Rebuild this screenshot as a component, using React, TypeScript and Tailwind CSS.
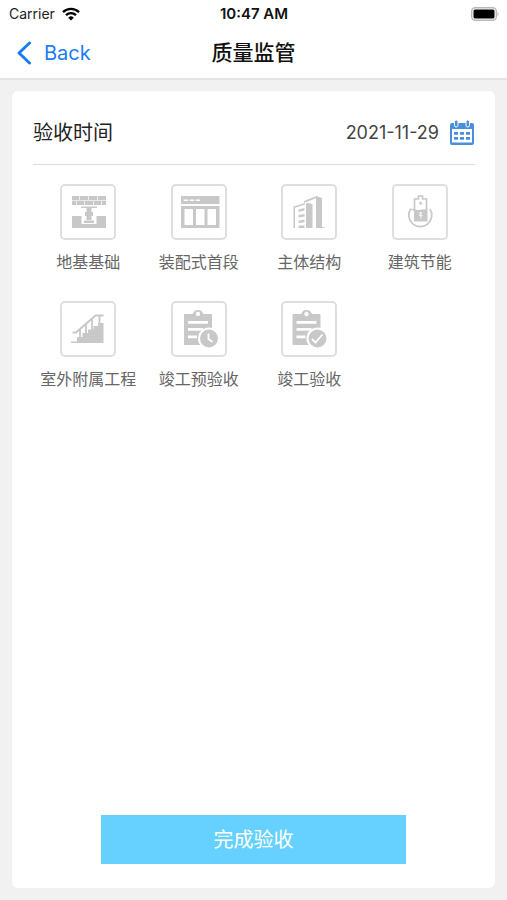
import type { ReactNode } from 'react';

// Clipboard shared by the two completion icons
function Clipboard({ children }: { children: ReactNode }) {
  return (
    <>
      <path d="M14 13h6.500c1 0 1.500-.5 2-1.500C23.500 9.700 25 9 27 9s3.500.7 4.500 2.500c.5 1 1 1.500 2 1.500H40c.7 0 1 .4 1 1v29c0 .7-.4 1-1 1H14c-.7 0-1-.4-1-1V14c0-.6.4-1 1-1z" />
      <circle cx="27" cy="13" r="2.200" fill="#fff" />
      <path d="M17 20h20v2.800H17zM17 27h15v2.800H17zM17 34.500h9v2.800h-9z" fill="#fff" />
      <circle cx="38" cy="37.500" r="11" fill="#fff" />
      <circle cx="38" cy="37.500" r="9" />
      {children}
    </>
  );
}

const items = [
  {
    name: '地基基础',
    icon: (
      <>
        <path d="M12 12h7.200v4H12zM19.900 12h8.200v4h-8.200zM28.800 12H37v4h-8.200zM37.700 12H46v4h-8.300z" />
        <path d="M12 17h4v4h-4zM16.700 17h7.500v4h-7.500zM24.900 17h8.300v4h-8.300zM33.900 17h7.500v4h-7.500zM42.100 17H46v4h-3.900z" />
        <path d="M12 16h34v1H12z" fillOpacity=".4" />
        <path d="M21 22.500h16V24H21zM26.500 24h5v4h1.500v4h-1.500v4h-5v-4H25v-4h1.500zM24 36.500h10V39H24z" />
        <path d="M12 32h9.500v8h15v-8H46v12H12z" />
      </>
    ),
  },
  {
    name: '装配式首段',
    icon: (
      <>
        <path d="M10 12h38.500v8H10zM10 22h38.500v22H10z" />
        <path d="M12.500 15.500h4.500v1.500h-4.500zM18.500 15.500H23v1.500h-4.500zM24.500 15.500H29v1.500h-4.500zM13.500 25H22v16h-8.500zM25 25h8.500v16H25zM36.500 25H45v16h-8.500z" fill="#fff" />
      </>
    ),
  },
  {
    name: '主体结构',
    icon: (
      <>
        <path d="M12.500 22.500L24 19v1.500l-10 3.200V44h-1.500z" />
        <path d="M17.500 25.500l6-1.500v2.500l-6 1.500zM17.500 31l6-1v2.500l-6 1zM17.500 36.500l6-.7v2.500l-6 .7zM17.500 41.500h6V44h-6z" />
        <path d="M25 19.500l2-.8 4.500 1.500V44H25z" />
        <path d="M23 17l12.500-5v2L26 17.700l-3 1zM35 12l6 2v29h2.500v1H35z" />
      </>
    ),
  },
  {
    name: '建筑节能',
    icon: (
      <>
        <path d="M22.500 26V15h4v-3h4v3h4v11M18.500 25a11.500 11.500 0 1 0 19.500 0" fill="none" stroke="#c8c8c8" strokeWidth="1.700" />
        <path d="M28 17.500h1.200v1.200h1.200v1.200h-1.200V21H28v-1.200h-1.200v-1.200H28zM17.500 24.500l4.500.5c4 2 9 0 13.500 0v12.500H22V27z" />
        <path d="M28 28h2l-.5 3H31l-3 4.500.5-3.500H27z" fill="#f2f2f2" />
      </>
    ),
  },
  {
    name: '室外附属工程',
    icon: (
      <>
        <path d="M11 40.500h6V36h5.500v-4H28v-3.500h5.500V25H38v-3h5.500v20H11z" />
        <path d="M12.500 31.500H16L35.500 14.500h8" fill="none" stroke="#c8c8c8" strokeWidth="2" />
        <path d="M20 28v9M26 23v10M32 18v11M39.500 15v8" fill="none" stroke="#c8c8c8" strokeWidth="1.800" />
      </>
    ),
  },
  {
    name: '竣工预验收',
    icon: (
      <Clipboard>
        <path d="M37.500 32.500V38l4 3" fill="none" stroke="#fff" strokeWidth="1.800" />
      </Clipboard>
    ),
  },
  {
    name: '竣工验收',
    icon: (
      <g transform="translate(-1.500 0)">
        <Clipboard>
          <path d="M32.500 38l3.500 3.500 7-8" fill="none" stroke="#fff" strokeWidth="1.800" />
        </Clipboard>
      </g>
    ),
  },
];

function StatusBar() {
  return (
    <div className="grid h-7 grid-cols-3 items-center pl-[9px] pr-2 text-sm text-[#222]">
      <div className="flex items-center gap-[7px]">
        <span>Carrier</span>
        <svg className="h-3.5 w-[18px]" viewBox="0 0 18 14" fill="none" stroke="#000" strokeWidth="2.300">
          <path d="M1 5.200a11.500 11.500 0 0 1 16 0M4 8.200a7.200 7.200 0 0 1 10 0" />
          <path d="M9 13.500L6.200 10.700a4 4 0 0 1 5.600 0z" fill="#000" stroke="none" />
        </svg>
      </div>
      <span className="text-center text-[15px] font-semibold text-[#111]">10:47 AM</span>
      <svg className="h-3.5 w-7 justify-self-end" viewBox="0 0 28 14">
        <rect x=".7" y=".7" width="24.600" height="12.600" rx="3.500" fill="#fff" stroke="#b8b8b8" strokeWidth="1.400" />
        <rect x="2.500" y="2.500" width="21" height="9" rx="1.500" fill="#000" />
        <path d="M26.500 5c1.500.4 1.500 3.600 0 4z" fill="#b8b8b8" />
      </svg>
    </div>
  );
}

function CalendarIcon() {
  return (
    <svg className="size-[26px]" viewBox="0 0 26 26" fill="#4a8fdc">
      <path d="M3 3h20a2 2 0 0 1 2 2v18a2 2 0 0 1-2 2H3a2 2 0 0 1-2-2V5a2 2 0 0 1 2-2z" />
      <path d="M3 9h20v13.500H3z" fill="#fff" />
      <rect x="5.500" y="0" width="3.500" height="7" rx="1.700" stroke="#fff" />
      <rect x="17" y="0" width="3.500" height="7" rx="1.700" stroke="#fff" />
      <path d="M5 12h4v2.800H5zM11 12h4v2.800h-4zM17 12h4v2.800h-4zM5 17h4v2.800H5zM11 17h4v2.800h-4zM17 17h4v2.800h-4z" />
    </svg>
  );
}

export default function App() {
  return (
    <div className="flex min-h-screen flex-col bg-[#f1f1f1] font-['Inter','Noto_Sans_CJK_SC',sans-serif]">
      <header className="border-b-2 border-[#e4e4e4] bg-white">
        <StatusBar />
        <div className="grid h-[50px] grid-cols-3 items-center px-4">
          <button type="button" className="flex items-center gap-3 justify-self-start text-xl text-[#1a7cf5]">
            <svg className="h-6 w-4" viewBox="0 0 16 24" fill="none" stroke="currentColor" strokeWidth="3" strokeLinecap="round" strokeLinejoin="round">
              <path d="M13.500 2L3 12l10.500 10" />
            </svg>
            Back
          </button>
          <h1 className="text-center text-[21px] font-medium text-[#111]">质量监管</h1>
        </div>
      </header>

      <main className="m-3 mt-[11px] flex flex-1 flex-col rounded-md bg-white px-5">
        <div className="ml-px flex h-[74px] items-center justify-between border-b border-[#dcdcdc] pt-2.5">
          <span className="text-xl leading-7 text-[#222]">验收时间</span>
          <button type="button" className="flex items-center gap-2.5 text-lg text-[#444]">
            2021-11-29
            <CalendarIcon />
          </button>
        </div>

        <div className="ml-px mt-[19px] grid grid-cols-4 gap-y-[27px]">
          {items.map((item) => (
            <button key={item.name} type="button" className="flex flex-col items-center gap-2.5 whitespace-nowrap">
              <span className="size-14 rounded-[5px] border-2 border-[#dedede]">
                <svg className="size-full" viewBox="2 2 52 52" fill="#c8c8c8">
                  {item.icon}
                </svg>
              </span>
              <span className="text-base leading-6 text-[#666]">{item.name}</span>
            </button>
          ))}
        </div>

        <button type="button" className="mx-auto mb-6 mt-auto h-[49px] w-[69%] bg-[#66d1ff] text-xl text-white">
          完成验收
        </button>
      </main>
    </div>
  );
}
